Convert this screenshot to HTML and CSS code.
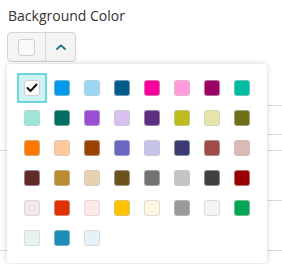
FILE: index.html
```html
<!DOCTYPE html>
<html>
<head>
<meta charset="utf-8">
<link rel="stylesheet" href="styles.css">
</head>
<body>
<div class="page">
  <div class="field-label">Background Color</div>
  <div class="picker-btn">
    <div class="btn-swatch"><span class="current"></span></div>
    <div class="btn-toggle">
      <svg width="10" height="6" viewBox="0 0 10 6"><polyline points="1,5 5,1.3 9,5" fill="none" stroke="#23708c" stroke-width="1.8" stroke-linecap="round" stroke-linejoin="round"/></svg>
    </div>
  </div>
  <div class="sheet">
    <div class="sheet-main">
      <div class="row r1"></div>
      <div class="row r2"></div>
    </div>
    <div class="sheet-side">
      <div class="row s1"></div>
      <div class="row s2"></div>
      <div class="row s3"></div>
      <div class="row s4"></div>
      <div class="row s5"></div>
    </div>
  </div>
</div>
<div class="popup">
  <div class="grid">
    <div class="cell selected"><span class="sw sw-white"><svg width="12" height="10" viewBox="0 0 12 10"><polyline points="1.5,5 4.5,8 10.5,1.5" fill="none" stroke="#111" stroke-width="2" stroke-linecap="round" stroke-linejoin="round"/></svg></span></div>
    <div class="cell"><span class="sw" style="background:#009bea"></span></div>
    <div class="cell"><span class="sw" style="background:#9ad5f5"></span></div>
    <div class="cell"><span class="sw" style="background:#005b8d"></span></div>
    <div class="cell"><span class="sw" style="background:#f7009b"></span></div>
    <div class="cell"><span class="sw" style="background:#ff9bd8"></span></div>
    <div class="cell"><span class="sw" style="background:#9b0064"></span></div>
    <div class="cell"><span class="sw" style="background:#00bca2"></span></div>

    <div class="cell"><span class="sw" style="background:#9ce5da"></span></div>
    <div class="cell"><span class="sw" style="background:#006e60"></span></div>
    <div class="cell"><span class="sw" style="background:#9a50d4"></span></div>
    <div class="cell"><span class="sw" style="background:#d8c0ef"></span></div>
    <div class="cell"><span class="sw" style="background:#5e2e82"></span></div>
    <div class="cell"><span class="sw" style="background:#bdbd20"></span></div>
    <div class="cell"><span class="sw" style="background:#e6e6a8"></span></div>
    <div class="cell"><span class="sw" style="background:#6f6f18"></span></div>

    <div class="cell"><span class="sw" style="background:#ff7700"></span></div>
    <div class="cell"><span class="sw" style="background:#ffc99b"></span></div>
    <div class="cell"><span class="sw" style="background:#9b4200"></span></div>
    <div class="cell"><span class="sw" style="background:#6a66c2"></span></div>
    <div class="cell"><span class="sw" style="background:#c4c4ea"></span></div>
    <div class="cell"><span class="sw" style="background:#3c3a75"></span></div>
    <div class="cell"><span class="sw" style="background:#9f4c46"></span></div>
    <div class="cell"><span class="sw" style="background:#dcb9b5"></span></div>

    <div class="cell"><span class="sw" style="background:#5e2b29"></span></div>
    <div class="cell"><span class="sw" style="background:#b98c30"></span></div>
    <div class="cell"><span class="sw" style="background:#e6d2ae"></span></div>
    <div class="cell"><span class="sw" style="background:#6e521d"></span></div>
    <div class="cell"><span class="sw" style="background:#737373"></span></div>
    <div class="cell"><span class="sw" style="background:#c4c4c4"></span></div>
    <div class="cell"><span class="sw" style="background:#404040"></span></div>
    <div class="cell"><span class="sw" style="background:#9a0000"></span></div>

    <div class="cell"><span class="sw" style="background:#f5e5e7"></span></div>
    <div class="cell"><span class="sw" style="background:#e03200"></span></div>
    <div class="cell"><span class="sw" style="background:#fce9e6"></span></div>
    <div class="cell"><span class="sw" style="background:#ffc200"></span></div>
    <div class="cell"><span class="sw" style="background:#fff7e2"></span></div>
    <div class="cell"><span class="sw" style="background:#999999"></span></div>
    <div class="cell"><span class="sw" style="background:#f4f4f4"></span></div>
    <div class="cell"><span class="sw" style="background:#00a651"></span></div>

    <div class="cell"><span class="sw" style="background:#e6f4ef"></span></div>
    <div class="cell"><span class="sw" style="background:#1b8fb7"></span></div>
    <div class="cell"><span class="sw" style="background:#e6f2f8"></span></div>
  </div>
</div>
</body>
</html>
```
FILE: styles.css
```css
html, body {
  margin: 0;
  padding: 0;
  background: #fff;
}
body {
  position: relative;
  width: 282px;
  height: 264px;
  overflow: hidden;
  font-family: "Open Sans", "Liberation Sans", sans-serif;
}
.page {
  padding: 6px 0 0 0;
}
.field-label {
  font-size: 14px;
  line-height: 20px;
  color: #333;
  margin-left: 8px;
}
.picker-btn {
  display: inline-flex;
  margin: 6px 0 0 7px;
  height: 30px;
  box-sizing: border-box;
  border: 1px solid #d4d4d4;
  border-radius: 4px;
  background: #f4f4f4;
}
.btn-swatch {
  width: 37px;
  display: flex;
  align-items: center;
  justify-content: center;
  border-right: 1px solid #d8d8d8;
}
.current {
  width: 17px;
  height: 17px;
  box-sizing: border-box;
  border: 1px solid #cfcfcf;
  border-radius: 3px;
  background: #fafafa;
}
.btn-toggle {
  width: 29px;
  display: flex;
  align-items: center;
  justify-content: center;
}
.btn-toggle svg { display: block; margin-top: -1px; }
.sheet {
  display: flex;
  margin-top: 2px;
}
.sheet-main { flex: 1; }
.sheet-side { width: 16px; }
.row { box-sizing: border-box; border-bottom: 1px solid #dcdcdc; }
.r1 { height: 87px; }
.r2 { height: 100px; }
.s1 { height: 42px; }
.s2 { height: 29px; }
.s3 { height: 16px; }
.s4 { height: 50px; }
.s5 { height: 50px; }
.popup {
  position: absolute;
  left: 7px;
  top: 64px;
  width: 260px;
  height: 199px;
  box-sizing: border-box;
  padding: 9px 10px 10px;
  background: #fff;
  border-radius: 4px;
  box-shadow: 0 0 6px rgba(0, 0, 0, 0.18);
}
.grid {
  display: grid;
  grid-template-columns: repeat(8, 30px);
  grid-auto-rows: 30px;
}
.cell {
  display: flex;
  align-items: center;
  justify-content: center;
  box-sizing: border-box;
}
.cell.selected {
  background: #cff2f5;
  border: 2px solid #6dd5de;
}
.sw {
  width: 16px;
  height: 16px;
  box-sizing: border-box;
  border-radius: 3px;
  border: 1px solid rgba(200, 200, 200, 0.55);
  display: flex;
  align-items: center;
  justify-content: center;
}
.sw-white {
  background: #fff;
  border-color: #cfcfcf;
}
.sw-white svg { display: block; }
```
